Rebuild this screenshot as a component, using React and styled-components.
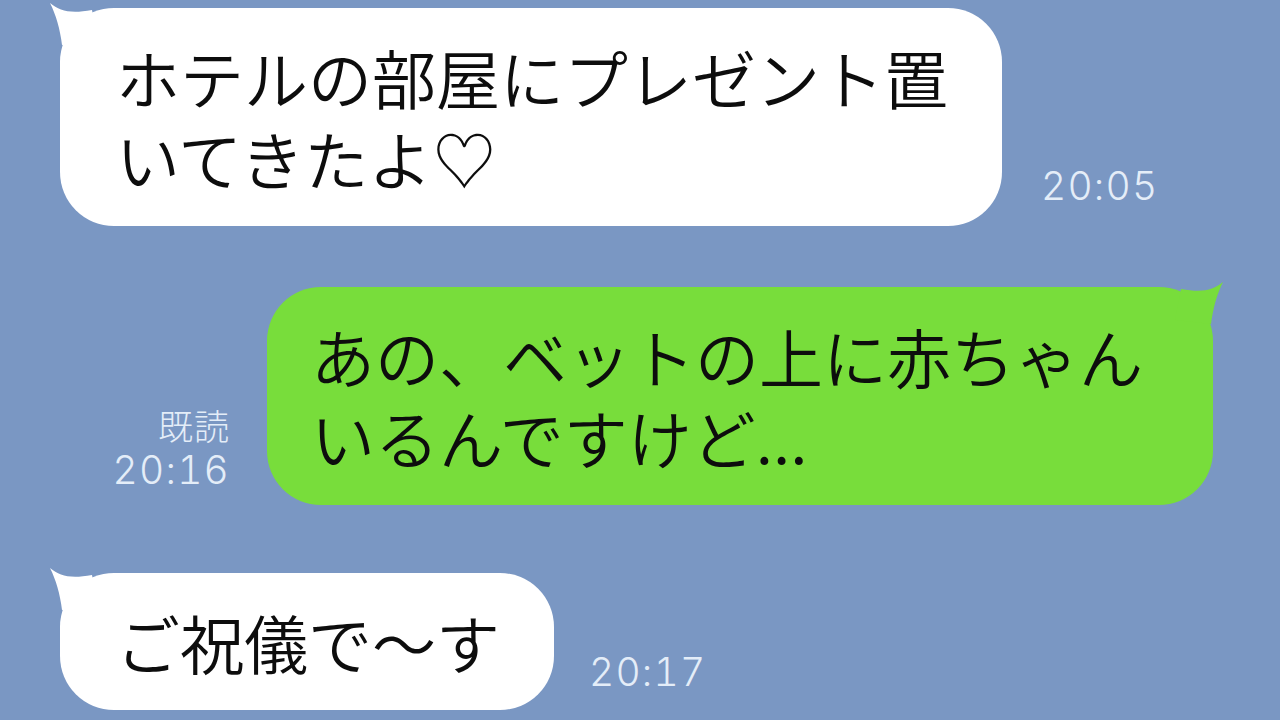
import React from "react";
import styled, { createGlobalStyle } from "styled-components";

const GlobalStyle = createGlobalStyle`
  html, body {
    margin: 0;
    padding: 0;
    background: #7a97c3;
  }
  body {
    font-family: "Noto Sans CJK JP", "Noto Sans", sans-serif;
  }
`;

const Screen = styled.div`
  width: 1280px;
  height: 720px;
  overflow: hidden;
  background: #7a97c3;
  display: flex;
  flex-direction: column;
  padding: 8px 67px 0 60px;
  box-sizing: border-box;
`;

const Row = styled.div`
  display: flex;
  align-items: flex-end;
  justify-content: ${({ mine }) => (mine ? "flex-end" : "flex-start")};
  margin-top: ${({ top }) => top || 0}px;
  gap: ${({ gap }) => gap}px;
`;

const Bubble = styled.div`
  position: relative;
  flex-shrink: 0;
  background: ${({ mine }) => (mine ? "#78dd3b" : "#ffffff")};
  border-radius: 54px;
  padding: ${({ mine }) => (mine ? "28px 70px 28px 44px" : "28px 54px 28px 56px")};
  font-size: 64px;
  font-weight: 350;
  line-height: 81px;
  color: #0d0d0d;
  white-space: nowrap;
`;

const Text = styled.p`
  position: relative;
  margin: 0;
`;

const Tail = styled.svg`
  position: absolute;
  top: -7px;
  width: 60px;
  height: 50px;
  ${({ mine }) => (mine ? "right: -12px; transform: scaleX(-1);" : "left: -12px;")}
`;

const Meta = styled.div`
  display: flex;
  flex-direction: column;
  align-items: ${({ mine }) => (mine ? "flex-end" : "flex-start")};
  margin-bottom: ${({ low }) => low}px;
  color: #e4edf8;
`;

const Read = styled.span`
  font-family: "Noto Sans CJK JP", sans-serif;
  font-weight: 300;
  font-size: 35px;
  line-height: 46px;
  letter-spacing: 1px;
`;

const Time = styled.span`
  font-family: Inter, "Liberation Sans", sans-serif;
  font-weight: 300;
  font-size: 39px;
  line-height: 44px;
  letter-spacing: 1.2px;
  font-variant-numeric: tabular-nums;
`;

const BubbleTail = ({ mine }) => (
  <Tail mine={mine} viewBox="0 0 60 50">
    <path
      d="M2 2 C 12 10, 22 13, 44 9 L 50 40 L 14 44 C 12 28, 8 14, 2 2 Z"
      fill={mine ? "#78dd3b" : "#ffffff"}
    />
  </Tail>
);

const messages = [
  {
    mine: false,
    lines: ["ホテルの部屋にプレゼント置", "いてきたよ♡"],
    time: "20:05",
    top: 0,
    low: 18,
    gap: 39,
  },
  {
    mine: true,
    lines: ["あの、ベットの上に赤ちゃん", "いるんですけど..."],
    time: "20:16",
    read: true,
    top: 61,
    low: 13,
    gap: 37,
  },
  {
    mine: false,
    lines: ["ご祝儀で〜す"],
    time: "20:17",
    top: 68,
    low: 16,
    gap: 35,
  },
];

const App = () => (
  <>
    <GlobalStyle />
    <Screen>
      {messages.map((m, i) => {
        const bubble = (
          <Bubble mine={m.mine} key="b">
            <BubbleTail mine={m.mine} />
            <Text>
              {m.lines.map((l, j) => (
                <React.Fragment key={j}>
                  {j > 0 && <br />}
                  {l}
                </React.Fragment>
              ))}
            </Text>
          </Bubble>
        );
        const meta = (
          <Meta mine={m.mine} low={m.low} key="m">
            {m.read && <Read>既読</Read>}
            <Time>{m.time}</Time>
          </Meta>
        );
        return (
          <Row mine={m.mine} top={m.top} gap={m.gap} key={i}>
            {m.mine ? [meta, bubble] : [bubble, meta]}
          </Row>
        );
      })}
    </Screen>
  </>
);

export default App;
